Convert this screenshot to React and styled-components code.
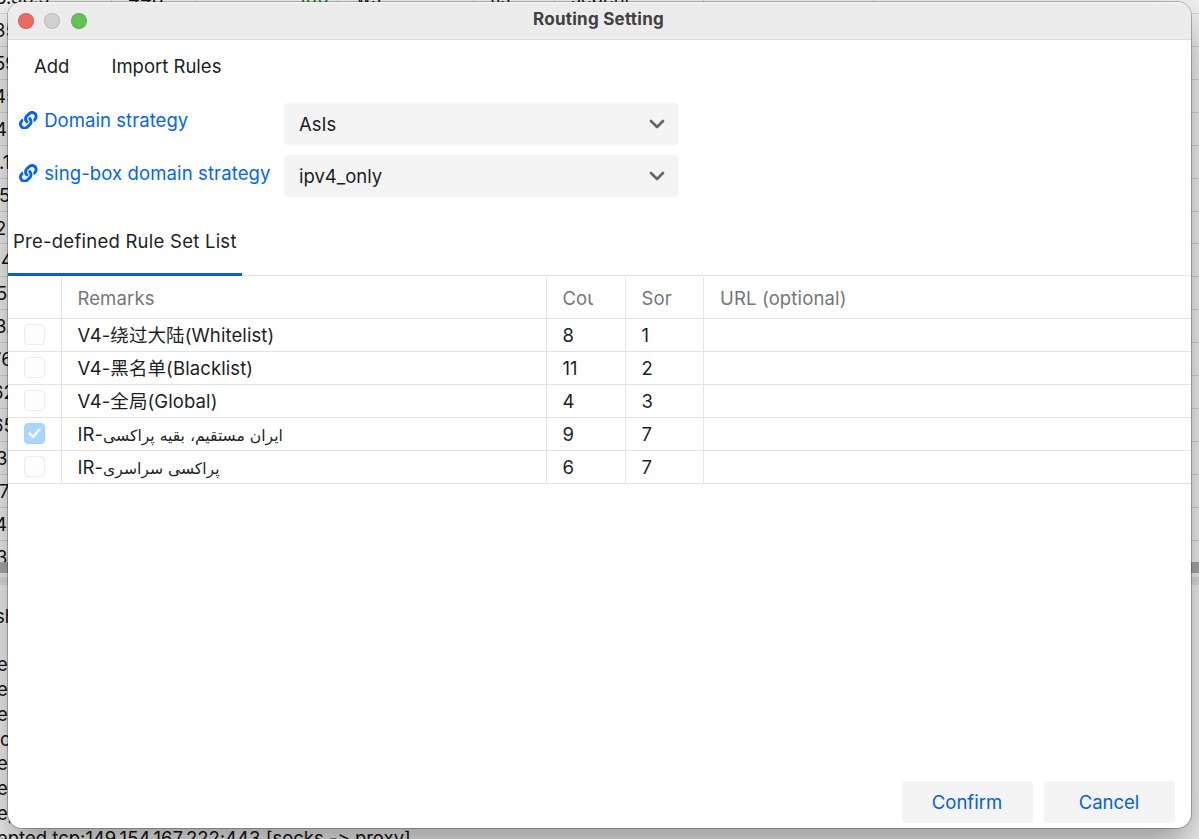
import React from 'react'
import styled, { createGlobalStyle } from 'styled-components'
import { FaLink } from 'react-icons/fa'

const GlobalStyle = createGlobalStyle`
  * {
    box-sizing: border-box;
  }
  body {
    margin: 0;
    overflow: hidden;
    font-family: Inter, 'Noto Sans CJK SC', 'DejaVu Sans', sans-serif;
    font-size: 18.5px;
    font-feature-settings: 'calt' 0;
    color: #1c1f23;
  }
`;

const Desktop = styled.div`
  position: relative;
  width: 1199px;
  height: 839px;
  overflow: hidden;
  background: #f2f2f2;
`;

const ServerTable = styled.div`
  display: flex;
  flex-direction: column;
  height: 562px;
  overflow: hidden;
`;

const ServerRow = styled.div`
  flex: none;
  height: 32.93px;
  border-bottom: 1px solid #d6d6d6;
  line-height: 33px;
  white-space: nowrap;
  color: #111;
`;

const FirstRow = styled(ServerRow)`
  display: grid;
  grid-template-columns: 112px 84px 142px 136px 81px 149px 170px;
  grid-template-rows: 13px;
  height: 14px;
  line-height: 30px;
`;

const FirstCell = styled.span`
  display: flex;
  align-items: flex-end;
  height: 13px;
  padding: 0 0 1.5px ${p => p.$left ?? 16}px;
  border-right: 1px solid #d6d6d6;
  color: ${p => p.$green ? '#008a00' : '#111'};
`;

const Peek = styled.span`
  display: block;
  margin-left: ${p => p.$x}px;
`;

const ScrollBar = styled.div`
  height: 11px;
  background: #aaa;
`;

const Splitter = styled.div`
  height: 8px;
  margin-top: 4px;
  background: #e0e0e0;
`;

const Log = styled.div`
  padding-top: 19px;
  line-height: 24.8px;
  white-space: nowrap;
  color: #111;
`;

const LogGap = styled.div`
  height: 23.5px;
`;

const Window = styled.div`
  position: absolute;
  left: 8px;
  top: 2px;
  width: 1183px;
  height: 826px;
  display: flex;
  flex-direction: column;
  overflow: hidden;
  border-radius: 14px;
  background: #fff;
  box-shadow: 0 0 0 1px rgba(0, 0, 0, 0.25), 0 18px 40px rgba(0, 0, 0, 0.38);
`;

const TitleBar = styled.div`
  display: grid;
  grid-template-columns: 1fr auto 1fr;
  align-items: center;
  flex: none;
  height: 38px;
  border-bottom: 1px solid #dcdcdc;
  border-top: 1px solid #f8f8f8;
  background: #ececec;
`;

const Lights = styled.div`
  display: flex;
  gap: 10.4px;
  padding-left: 10px;
`;

const Light = styled.span`
  width: 16px;
  height: 16px;
  border-radius: 50%;
  border: 1px solid rgba(0, 0, 0, 0.1);
  background: ${p => p.$color};
`;

const Title = styled.h1`
  margin: 0;
  padding: 0 2px 4px 0;
  font-size: 17px;
  font-weight: 700;
  letter-spacing: 0.25px;
  color: #404040;
`;

const Menu = styled.div`
  display: flex;
  gap: 42px;
  flex: none;
  height: 51px;
  padding-left: 26px;
  line-height: 53px;
`;

const Settings = styled.div`
  display: grid;
  grid-template-columns: 264.4px 394px;
  row-gap: 10.5px;
  flex: none;
  padding: 12px 0 0 11.2px;
`;

const SettingLink = styled.a`
  display: flex;
  align-items: center;
  gap: 6.4px;
  height: ${p => p.$tall ? '35px' : '33.6px'};
  color: #0064fa;
  letter-spacing: ${p => p.$tall ? '0.12px' : '0.06px'};
  white-space: nowrap;

  svg {
    flex: none;
  }
`;

const Combo = styled.div`
  display: flex;
  align-items: center;
  justify-content: space-between;
  height: 41.8px;
  padding: 0 13px 0 15.4px;
  border-radius: 4px;
  background: #f4f4f4;
`;

const Tabs = styled.div`
  display: flex;
  flex: none;
  height: 78px;
  margin-top: 0.9px;
  border-bottom: 1px solid #e4e4e4;
`;

const Tab = styled.div`
  display: flex;
  align-items: center;
  width: 234px;
  height: 78px;
  padding: 12px 0 0 5px;
  border-bottom: 3px solid #0062d6;
  letter-spacing: 0.25px;
  white-space: nowrap;
`;

const Row = styled.div`
  display: grid;
  grid-template-columns: 54px 485px 79px 78px 1fr;
  flex: none;
  height: 33px;
  border-bottom: 1px solid #e4e4e4;
`;

const HeadRow = styled(Row)`
  height: 43px;
  padding-top: 1px;
  color: #74767a;
  letter-spacing: 0.15px;
`;

const Cell = styled.div`
  display: flex;
  align-items: center;
  min-width: 0;
  padding: 0 ${p => p.$right || 16}px 0 15.4px;
  border-right: 1px solid #e4e4e4;
  white-space: nowrap;

  &:last-child {
    padding-left: 16px;
    border-right: 0;
  }
`;

const CheckCell = styled(Cell)`
  padding: 0 0 0 16px;
`;

const Clip = styled.span`
  overflow: hidden;
  padding-top: 1px;
`;

const Remark = styled.span`
  letter-spacing: 0.1px;
  padding-bottom: ${p => p.$raised ? '2px' : '0'};
`;

const Persian = styled.span`
  font-family: 'DejaVu Sans', sans-serif;
  font-size: 15.6px;
  letter-spacing: 0;
`;

const Check = styled.span`
  display: flex;
  align-items: center;
  justify-content: center;
  flex: none;
  width: 21px;
  height: 21px;
  border-radius: 4px;
  border: 1px solid ${p => p.$on ? '#a6d3fc' : '#ececec'};
  background: ${p => p.$on ? '#a9d6fe' : '#fdfdfd'};
`;

const Footer = styled.div`
  display: flex;
  justify-content: flex-end;
  gap: 11px;
  margin-top: auto;
  padding: 0 16px 5px;
`;

const Button = styled.button`
  width: 131px;
  height: 42px;
  padding: 0 1px 0 0;
  border: 0;
  border-radius: 4px;
  background: #f4f4f4;
  color: #0062d6;
  font: inherit;
`;

const servers = [
  ['35', -6], ['59', -6], ['45', -6], ['4', -5], ['.1', -1], ['5', -1], ['2', -5], ['4', 1],
  ['5', -4], ['3.', -5], ['76', -9], ['62', -8], ['65', -8], ['3', -4], ['7', -1], ['4', -5], ['3', -4],
]

const logs = [['e', -3], ['e', -3], ['ep', -3], ['c', 0], ['ec', -3], ['ec', -3], ['e,', -3]]

const rules = [
  { name: 'V4-绕过大陆(Whitelist)', count: 8, sort: 1 },
  { name: 'V4-黑名单(Blacklist)', count: 11, sort: 2 },
  { name: 'V4-全局(Global)', count: 4, sort: 3 },
  { name: 'IR-', persian: 'ایران مستقیم، بقیه پراکسی', count: 9, sort: 7, on: true },
  { name: 'IR-', persian: 'پراکسی سراسری', count: 6, sort: 7 },
]

function Select({ value }) {
  return (
    <Combo>
      {value}
      <svg width="16" height="10" viewBox="0 0 16 10" fill="none" stroke="#666" strokeWidth="2.7" strokeLinecap="round" strokeLinejoin="round">
        <path d="M2 2l6 6 6-6" />
      </svg>
    </Combo>
  )
}

function Background() {
  return (
    <>
      <ServerTable>
        <FirstRow>
          <FirstCell $left={0}><Peek $x={-5}>8.36.5</Peek></FirstCell>
          <FirstCell>448</FirstCell>
          <FirstCell $green $left={102}>100</FirstCell>
          <FirstCell $left={18}>ws</FirstCell>
          <FirstCell>tls</FirstCell>
          <FirstCell>sepehr</FirstCell>
          <FirstCell />
        </FirstRow>
        {servers.map(([text, x], i) => (
          <ServerRow key={i}><Peek $x={x}>{text}</Peek></ServerRow>
        ))}
      </ServerTable>
      <ScrollBar />
      <Splitter />
      <Log>
        <Peek $x={-5}>sh</Peek>
        <LogGap />
        {logs.map(([text, x], i) => <Peek key={i} $x={x}>{text}</Peek>)}
        <Peek $x={-3}>epted tcp:149.154.167.222:443 [socks -&gt; proxy]</Peek>
      </Log>
    </>
  )
}

function App() {
  return (
    <Desktop>
      <GlobalStyle />
      <Background />
      <Window>
        <TitleBar>
          <Lights>
            <Light $color="#ed6a5e" />
            <Light $color="#d1d1d1" />
            <Light $color="#61c454" />
          </Lights>
          <Title>Routing Setting</Title>
        </TitleBar>
        <Menu>
          <span>Add</span>
          <span>Import Rules</span>
        </Menu>
        <Settings>
          <SettingLink><FaLink size={18.6} />Domain strategy</SettingLink>
          <Select value="AsIs" />
          <SettingLink $tall><FaLink size={18.6} />sing-box domain strategy</SettingLink>
          <Select value="ipv4_only" />
        </Settings>
        <Tabs>
          <Tab>Pre-defined Rule Set List</Tab>
        </Tabs>
        <HeadRow>
          <Cell />
          <Cell><Clip>Remarks</Clip></Cell>
          <Cell $right={32}><Clip>Count</Clip></Cell>
          <Cell $right={31}><Clip>Sort</Clip></Cell>
          <Cell><Clip>URL (optional)</Clip></Cell>
        </HeadRow>
        {rules.map((rule, i) => (
          <Row key={i}>
            <CheckCell>
              <Check $on={rule.on}>
                {rule.on && (
                  <svg width="13" height="11" viewBox="0 0 13 11" fill="none" stroke="#fff" strokeWidth="2.4" strokeLinecap="round" strokeLinejoin="round">
                    <path d="M1.5 5.5l3.5 3.5 6.3-7.5" />
                  </svg>
                )}
              </Check>
            </CheckCell>
            <Cell>
              <Remark $raised={!rule.persian}>
                {rule.name}{rule.persian && <Persian>{rule.persian}</Persian>}
              </Remark>
            </Cell>
            <Cell>{rule.count}</Cell>
            <Cell>{rule.sort}</Cell>
            <Cell />
          </Row>
        ))}
        <Footer>
          <Button>Confirm</Button>
          <Button>Cancel</Button>
        </Footer>
      </Window>
    </Desktop>
  )
}

export default App
